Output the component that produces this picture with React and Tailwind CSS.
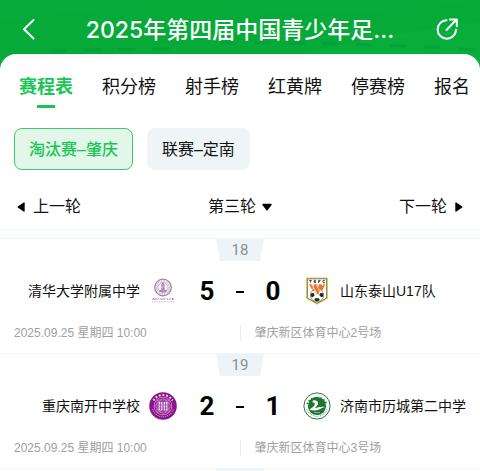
import React, { useState } from 'react';

const TABS = ['赛程表', '积分榜', '射手榜', '红黄牌', '停赛榜', '报名'];
const STAGES = ['淘汰赛–肇庆', '联赛–定南'];

const TsinghuaLogo = () => (
  <svg viewBox="0 0 28 28" className="w-7 h-7 shrink-0" aria-hidden="true">
    <g fill="none" stroke="#a47aa8">
      <circle cx="14" cy="10.5" r="8.3" strokeWidth="1.2" />
      <circle cx="14" cy="10.5" r="6.6" strokeWidth="1.6" strokeDasharray="1 0.7" opacity="0.6" />
      <circle cx="14" cy="10.5" r="5" strokeWidth="0.7" />
    </g>
    <path d="M14 5.5l1.7 2v5.5h1.8v1.7h-7V13h1.8V7.5z" fill="#a47aa8" />
    <path d="M14 7v7M11 10h6" stroke="#eee2ef" strokeWidth="0.5" />
    <path d="M3.5 22.6l2-1.2M4 21.3l1.5 1.6M7 21.2v2M8.6 22.7l1.4-1.5M11.5 21.3l1 1.6M14 21.2v1.8M15.2 22h1.4M18 21.2l1 1.7M20.5 22.8l1-1.6M23.5 21.2v1.7M22.8 22h1.8" stroke="#8d5b93" strokeWidth="0.8" />
    <path d="M3 24.8h22" stroke="#cdb1cf" strokeWidth="0.6" />
  </svg>
);

const TaishanLogo = () => (
  <svg viewBox="0 0 28 28" className="w-7 h-7 shrink-0" aria-hidden="true">
    <path d="M3 .5h22v21.3L14 27.8 3 21.8z" fill="#e9d44a" />
    <path d="M4.4 1.8h19.2V21L14 26.3 4.4 21z" fill="#fff" stroke="#39352c" strokeWidth="0.6" />
    <path d="M6 3.4h3M7.5 3.4v2.4M13 3.4h-2v1.1h1.8v1.1H11M15.5 5.8V3.4h2M15.5 4.6H17M22 3.4h-2v2.3h2" fill="none" stroke="#333" strokeWidth="0.8" />
    <circle cx="14" cy="18.2" r="6.6" fill="#fff" stroke="#555" strokeWidth="0.6" />
    <path d="M7.8 16.5l2.7-.8 1.2 2.5-2 2-2-.8zM20.2 16.5l-2.7-.8-1.2 2.5 2 2 2-.8zM12 21.3h4l.8 2-2.8 1.2-2.8-1.2z" fill="#24282b" />
    <path d="M6 7.2h3.4l1.4 3 .2-3h3.2l1.6 3 .1-3h2.3l1.7 2 .1-2h2.2l-3 6.6-2-1-1.8 5-2-1.2-1.5-2.6L9.8 14z" fill="#e8752c" />
    <path d="M8.5 7.2l5 8.6M13.2 7.2l3.3 6.5M9.3 12.5l2-1.6" stroke="#fff" strokeWidth="0.7" />
  </svg>
);

const NankaiLogo = () => (
  <svg viewBox="0 0 28 28" className="w-7 h-7 shrink-0" aria-hidden="true">
    <circle cx="14" cy="14" r="13.8" fill="#8b168b" />
    <path d="M4.5 8.5A11 11 0 0 1 23.5 8.5" fill="none" stroke="#f0d9ef" strokeWidth="2" strokeDasharray="1.8 1.8" />
    <path d="M3.5 17A11 11 0 0 0 24.5 17" fill="none" stroke="#c883c8" strokeWidth="1.2" strokeDasharray="1 1" />
    <g fill="none" stroke="#d7a0d7" strokeWidth="0.7">
      <circle cx="14" cy="14" r="8.9" />
      <rect x="8" y="8" width="12" height="12" />
      <path d="M14 5.5l8.5 8.5-8.5 8.5L5.5 14z" />
    </g>
    <path d="M9.5 9.8h4v8.7h-4zM14.5 9.8h4v8.7h-4z" fill="#f1dff1" />
    <path d="M11.5 10v8M16.5 10v8M10 13h3M15 13h3M10 16h3M15 16h3" stroke="#8b168b" strokeWidth="0.6" />
  </svg>
);

const LichengLogo = () => (
  <svg viewBox="0 0 28 28" className="w-7 h-7 shrink-0" aria-hidden="true">
    <circle cx="14" cy="14" r="13.1" fill="#fff" stroke="#2a7a3c" strokeWidth="1" />
    <path d="M4.2 12A10.8 10.8 0 0 1 23.8 12" fill="none" stroke="#2a7a3c" strokeWidth="2" strokeDasharray="1.5 1.6" />
    <path d="M3.8 17A10.8 10.8 0 0 0 24.2 17" fill="none" stroke="#77aa80" strokeWidth="1.2" strokeDasharray="0.9 0.9" />
    <circle cx="14" cy="14" r="9.1" fill="#1f7535" />
    <path d="M10 8.5c2.2-.6 4.8.2 5 2.4.2 2-2 3.6-3.2 5.3 2.7-.8 6.3-1.8 10.3-1.2-2.8.5-4.6 1.8-6.4 2.7-3 1.3-7.2.9-9.2-.5 2.6-.8 5-3 5.3-5.2.1-1.3-.6-1.6-2.6-1.8z" fill="#fff" />
    <path d="M11 20.5h6" stroke="#9bc7a3" strokeWidth="0.8" />
  </svg>
);

const MATCHES = [
  {
    no: 18,
    home: { name: '清华大学附属中学', score: 5, Logo: TsinghuaLogo },
    away: { name: '山东泰山U17队', score: 0, Logo: TaishanLogo },
    time: '2025.09.25 星期四 10:00',
    venue: '肇庆新区体育中心2号场',
  },
  {
    no: 19,
    home: { name: '重庆南开中学校', score: 2, Logo: NankaiLogo },
    away: { name: '济南市历城第二中学', score: 1, Logo: LichengLogo },
    time: '2025.09.25 星期四 10:00',
    venue: '肇庆新区体育中心3号场',
  },
];

const Badge = ({ children }) => (
  <div className="mx-auto w-12 h-[22px] bg-[#edf3f6] [clip-path:polygon(0_0,100%_0,92%_100%,8%_100%)] text-center text-[15px] leading-[22px] text-[#8b9093] font-['Roboto']">
    {children}
  </div>
);

const MatchCard = ({ match }) => {
  const { home, away } = match;
  return (
    <li className="h-[115px] border-t border-[#f3f5f6]">
      <Badge>{match.no}</Badge>
      <div className="mt-4 flex items-center h-7 text-sm text-[#111]">
        <div className="flex-1 flex items-center justify-end gap-[9px]">
          <span>{home.name}</span>
          <home.Logo />
        </div>
        <div className="w-[126px] flex items-center justify-center pt-0.5 text-[26px] font-bold text-black font-['Roboto']">
          <span className="w-4 text-center">{home.score}</span>
          <span className="mx-[21px] w-2 h-0.5 bg-black" />
          <span className="w-4 text-center">{away.score}</span>
        </div>
        <div className="flex-1 flex items-center gap-[9px]">
          <away.Logo />
          <span>{away.name}</span>
        </div>
      </div>
      <div className="mt-5 flex items-center h-4 text-xs text-[#a0a0a0]">
        <span className="flex-1 pl-3.5">{match.time}</span>
        <span className="flex-1 border-l border-[#e9edef] leading-4 pl-3.5">{match.venue}</span>
      </div>
    </li>
  );
};

const HeaderPattern = () => (
  <svg viewBox="0 0 480 80" preserveAspectRatio="none" className="absolute inset-0 w-full h-full" aria-hidden="true">
    <path d="M0 22Q120 2 250 10T480 0V0H0z" fill="#0db443" opacity="0.25" />
    <path d="M300 54Q400 30 480 22V80H300z" fill="#0bb341" opacity="0.4" />
    <path d="M0 34Q120 18 240 32T480 30" fill="none" stroke="#12b548" strokeWidth="1" opacity="0.3" />
    <path d="M50 51Q110 49 180 49M220 43Q350 42 480 50" fill="none" stroke="#078f32" strokeWidth="3" strokeDasharray="17 17" opacity="0.35" />
  </svg>
);

export default function App() {
  const [tab, setTab] = useState(0);
  const [stage, setStage] = useState(0);

  return (
    <div className="relative overflow-hidden bg-[#05aa39] font-['Liberation_Sans','Noto_Sans_CJK_SC',sans-serif]">
      <div className="absolute inset-x-0 top-0 h-20">
        <HeaderPattern />
      </div>
      <header className="relative flex items-center justify-between h-[54px] pl-5 pr-5 pt-1 text-white">
        <button type="button" aria-label="返回" className="w-6 h-6">
          <svg viewBox="0 0 24 24" className="w-6 h-6">
            <path d="M13.5 3L4 12.2 13.5 21.5" fill="none" stroke="currentColor" strokeWidth="2" strokeLinecap="round" />
          </svg>
        </button>
        <h1 className="pt-0.5 text-[23px] leading-8 font-medium whitespace-nowrap font-['Inter','Noto_Sans_CJK_SC',sans-serif]">
          2025年第四届中国青少年足...
        </h1>
        <button type="button" aria-label="分享" className="w-6 h-6">
          <svg viewBox="0 0 24 24" className="w-6 h-6" fill="none" stroke="currentColor" strokeWidth="2" strokeLinecap="round" strokeLinejoin="round">
            <path d="M10.5 3.3A9.2 9.2 0 1 0 20 12.7M10.5 13L19.8 3.3M14 2.5h6.8v6.8" />
          </svg>
        </button>
      </header>

      <main className="relative rounded-t-2xl bg-white">
        <nav className="flex gap-[29px] h-[60px] pl-[19px] pt-5 overflow-hidden text-lg leading-[26px] text-[#111]">
          {TABS.map((label, i) => (
            <button
              key={label}
              type="button"
              onClick={() => setTab(i)}
              className={`shrink-0 flex flex-col items-center ${tab === i ? 'font-bold text-[#17c653]' : ''}`}
            >
              {label}
              {tab === i && <span className="mt-[5px] w-[18px] h-[3px] bg-[#17c653]" />}
            </button>
          ))}
        </nav>

        <div className="flex gap-3.5 px-3.5 pt-3.5">
          {STAGES.map((label, i) => (
            <button
              key={label}
              type="button"
              onClick={() => setStage(i)}
              className={`h-[42px] px-3.5 pt-0.5 rounded-lg border text-base ${stage === i
                ? 'bg-[#e2f7e9] border-[#3cc96b] font-medium text-[#17c653]'
                : 'bg-[#eff4f7] border-[#eff4f7] text-[#111]'
                }`}
            >
              {label}
            </button>
          ))}
        </div>

        <div className="flex items-center justify-between h-[59px] pt-3.5 px-[17px] text-base leading-6 text-[#111]">
          <button type="button" className="flex items-center gap-2">
            <svg viewBox="0 0 8 10" className="w-2 h-2.5"><path d="M7 1v8L1.2 5z" fill="#000" stroke="#000" strokeWidth="1.4" strokeLinejoin="round" /></svg>
            上一轮
          </button>
          <button type="button" className="flex items-center gap-1.5">
            第三轮
            <svg viewBox="0 0 10 8" className="w-2.5 h-2"><path d="M1 1.5h8L5 6.8z" fill="#000" stroke="#000" strokeWidth="1.4" strokeLinejoin="round" /></svg>
          </button>
          <button type="button" className="flex items-center gap-2">
            下一轮
            <svg viewBox="0 0 8 10" className="w-2 h-2.5"><path d="M1 1v8l5.8-4z" fill="#000" stroke="#000" strokeWidth="1.4" strokeLinejoin="round" /></svg>
          </button>
        </div>

        <div className="h-[9px] border-t border-[#edf5f7] bg-[#fcfefe]" />
        <ul>
          {MATCHES.map((match) => (
            <MatchCard key={match.no} match={match} />
          ))}
        </ul>
        <div className="h-[3px] border-t border-[#f3f5f6] overflow-hidden">
          <Badge />
        </div>
      </main>
    </div>
  );
}
